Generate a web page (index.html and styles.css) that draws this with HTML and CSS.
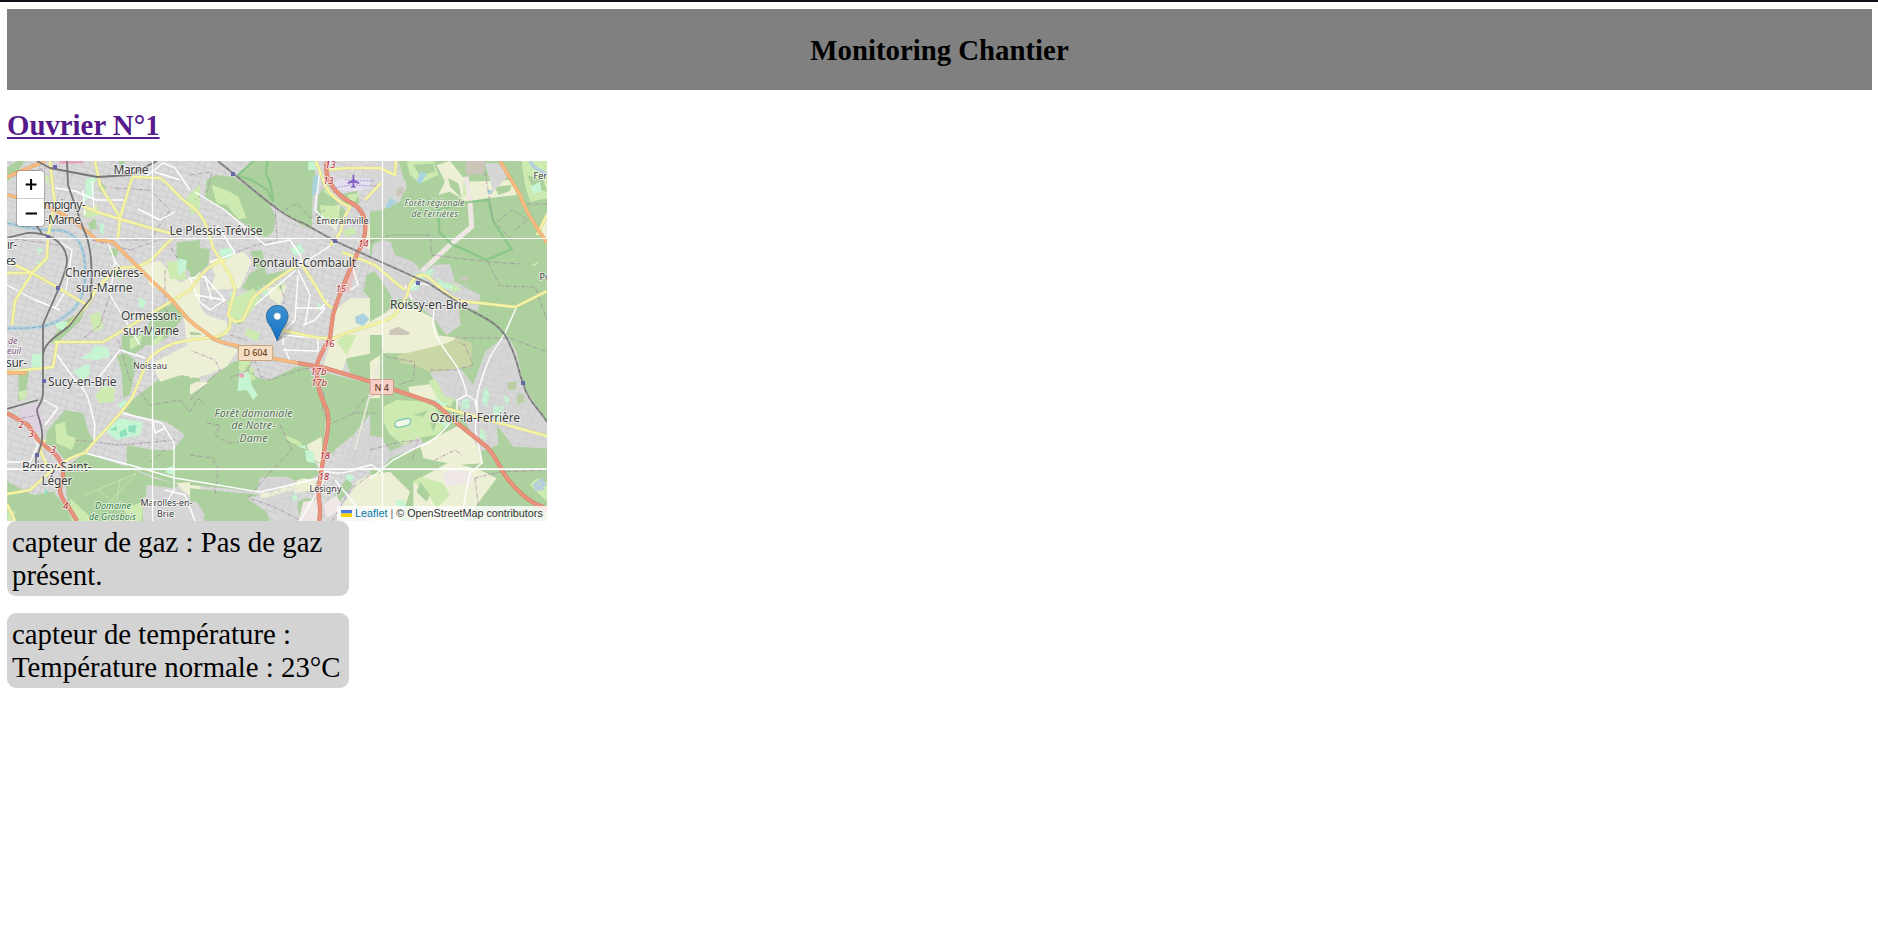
FILE: index.html
```html
<!DOCTYPE html>
<html lang="fr">
<head>
<meta charset="utf-8">
<title>Monitoring Chantier</title>
<link rel="stylesheet" href="styles.css">
</head>
<body>
<header class="banner"><h1 class="banner-title">Monitoring Chantier</h1></header>
<main class="worker">
<h1 class="worker-title"><a class="worker-link" href="#">Ouvrier N°1</a></h1>
<div class="map">
<svg class="map-canvas" viewBox="7 161 540 360" preserveAspectRatio="none">
<defs>
<pattern id="streets" width="61" height="53" patternUnits="userSpaceOnUse" patternTransform="rotate(17) scale(.34)">
<path d="M0 8H61M0 26H38M22 40H61M10 0V26M28 8V53M47 0V40M38 26L61 32M0 46L28 40" fill="none" stroke="#c6c6c6" stroke-width="2"/>
</pattern>
</defs>
<rect x="7" y="161" width="540" height="360" fill="#dadada"/>
<rect x="7" y="161" width="540" height="360" fill="url(#streets)"/>

<!-- land cover, one group per map sector -->
<g transform="translate(0 155) scale(.33333)">
<path class="wood" d="M530 262L600 255V350L580 360L530 318ZM265 205L285 190L292 220L270 226ZM330 278L355 282L350 306L330 300ZM22 38L50 18H75L50 55L22 80ZM455 475L530 440L555 480L500 550L455 570H400L440 530ZM150 560L190 500L245 470L262 450L240 500L190 545L170 570ZM355 18H375L365 45ZM290 65L320 100L300 112Z"/>
<path class="farm" d="M415 330L480 318L540 385L600 350V570H560L550 470L500 420L450 390ZM580 290H600V350Z"/>
<path class="grass" d="M500 320L550 318L560 375L510 372ZM245 170L290 150L300 180L260 190ZM130 55L150 70L145 100ZM270 480L300 470L310 520L280 530ZM340 350L365 340L360 380ZM455 540L480 520L490 550L470 570H455ZM560 125L600 90V160L575 180Z"/>
<path class="park" d="M255 75L290 60L275 125L245 145L258 110ZM300 205L312 204L310 240L300 230ZM165 500L205 500L190 525L170 520ZM530 310L560 315L558 345L535 362ZM418 425L440 440L430 460L415 455ZM115 275L130 285L115 300ZM370 385L385 390L375 420ZM110 320L128 325L118 338Z"/>
<path class="water-line" d="M22 205C80 215 130 230 170 225C230 230 252 270 255 330C260 400 245 450 200 480C150 520 100 520 22 520"/>
<path class="water-edge" d="M22 205C80 215 130 230 170 225C230 230 252 270 255 330C260 400 245 450 200 480C150 520 100 520 22 520"/>
<path fill="#e8a2b8" d="M178 18H248L250 25L180 26Z"/>
</g>
<g transform="translate(190 155) scale(.33333)">
<path class="wood" d="M50 75L75 60L130 65L235 140L257 185L250 230L228 246L190 232L165 208L110 170L45 130ZM140 60L190 18H372L376 60L385 90L368 130L365 222L330 208L240 140ZM385 120L400 100L450 150L465 165L460 205L380 185ZM180 355L225 330L230 370L215 400L190 412L155 400ZM225 360L290 345L240 390L222 390ZM0 275L60 282L55 330L0 375ZM530 360L570 340V420L540 430L520 410ZM480 460L550 450L540 500L480 540L430 545L440 500ZM115 460L150 450L180 470L150 510L115 500ZM545 18H570V35L540 28ZM440 120L500 108L510 145L470 150ZM0 530L35 535L100 545L60 570H0ZM180 290L215 285L225 325L200 340Z"/>
<path class="farm" d="M60 322L160 290L185 320L150 400L60 405L75 360ZM0 415L50 480L110 500L115 540L40 545L0 500ZM430 470L480 430H570V570H450L425 540ZM230 400L290 390L270 450L240 430ZM395 160L450 150L440 230L400 190ZM520 210H570V300L530 280Z"/>
<path class="grass" d="M65 90L110 105L145 125L170 190L145 193L110 150L80 145ZM390 150L445 155L450 200L395 190ZM455 230L490 215L500 235L470 245ZM110 440L190 400L215 430L160 500L120 495ZM170 520L210 535L200 560L165 540ZM470 120L510 115L490 145ZM250 390L285 385L275 410ZM415 90L430 130L400 110Z"/>
<path class="park" d="M355 20H378V45H355ZM85 285L125 275L130 305L100 315ZM300 282L330 265L345 290L315 302ZM120 410L135 405V430L122 428ZM205 395L235 410L225 425ZM380 440L400 455L385 465Z"/>
<path class="water" d="M370 65L390 60L385 105L365 125ZM495 485L520 475L538 492L520 512L498 505Z"/>
<path fill="none" stroke="#7fc182" stroke-width="6" opacity=".8" d="M190 18L142 62L185 75L232 105L250 140L243 90L228 55L232 18"/>
<path fill="#e6c4c2" d="M470 350L500 340L480 410L460 415Z"/>
<path fill="#e5e0ef" d="M430 105L440 75L500 70H560L550 98L500 108Z"/>
</g>
<g transform="translate(370 155) scale(.33333)">
<path class="wood" d="M85 18H531V570H200L190 500L130 460H60L0 510V420L35 360L0 310V170L38 165L80 140L110 100Z"/>
<path class="farm" d="M200 30L240 18L290 80L430 75L440 120L350 130L290 140L240 110L205 120L225 80ZM0 500L80 455L135 460L190 490L215 570H0ZM510 230L531 170V270Z"/>
<path class="wood" d="M235 70L265 85L275 130L240 95ZM375 95L425 90L420 108L385 120Z"/>
<path class="town" d="M0 18H80L70 60L110 80L90 140L30 165H0ZM10 268L40 255L62 260L75 300L130 320L165 360L190 330L240 328L255 380L330 420L325 468L265 450L272 510L230 540L190 490L120 430L70 435L50 400L0 330ZM345 25H385L415 62L370 110Z"/>
<path class="grass" d="M110 18H190L205 60L150 85L120 60ZM455 18H531V130L480 140L465 90ZM280 78H295L300 120L280 125ZM485 330L510 318L495 334ZM235 380L275 400L250 415Z"/>
<path class="wood" d="M130 30L190 25L195 50L150 62ZM470 60L520 75L531 110L490 100Z"/>
<path class="park" d="M130 360L190 340V362L150 375ZM200 370L250 390L245 405L210 398ZM480 95L510 80L515 110L490 118ZM130 375L150 400L120 410Z"/>
<path class="water" d="M140 80L150 50L170 55L155 85ZM45 155L60 130L80 138L60 160ZM354 105L370 106L365 118L352 115Z"/>
<path fill="#ccc5ba" d="M285 18H345L340 58L290 60ZM60 525L85 515L122 535L90 555L52 560ZM80 100L100 95V115L80 125ZM270 368L300 365L295 375L275 374Z"/>
<path fill="none" stroke="#efe7e4" stroke-width="15" d="M288 65L300 140L305 215L240 270L155 350"/>
<path fill="none" stroke="#7fc182" stroke-width="7" opacity=".75" d="M208 232L206 165L285 142L355 135L370 200L425 283L348 315L290 287L245 268Z"/>
<path class="water-line" d="M480 18C490 45 515 45 531 60"/>
</g>
<g transform="translate(0 335) scale(.33333)">
<path class="wood" d="M140 290L195 225L250 235L265 290L285 320L240 355L200 380L165 340L138 325ZM390 200L480 130L545 120L600 128V440L520 445L450 420L380 395V330L460 345L520 345L555 300L500 260L400 240L365 225ZM22 440L100 480L160 470L200 520L215 558H22ZM190 400L255 355L380 395L460 430L540 450L500 470L425 490L430 558H215L200 480ZM350 60L380 55L410 80L390 180L370 190L365 110ZM365 0H480L440 30L400 60L365 40ZM55 110L90 95L75 190L55 200ZM580 490L600 500V558H590Z"/>
<path class="farm" d="M455 85L600 12V130L545 120L480 140ZM530 445L600 440V500L560 480Z"/>
<path class="grass" d="M165 270L195 260L200 300L230 310L215 345L170 325ZM285 185L310 150L345 160L340 200L300 205ZM390 10L430 0L415 30L390 45ZM22 520L45 530L40 558H22ZM210 490L265 540L270 558H215ZM55 170L80 165V190L60 195ZM370 520L430 500L425 558H390Z"/>
<path class="park" d="M318 285L360 250L428 262L420 300L350 315L325 295ZM218 108L268 85L270 120L245 135ZM240 68L270 55L285 30L325 38L330 65L290 75L250 72ZM350 210L375 195L390 205L370 225ZM495 400L520 393V420L500 415ZM95 60L125 55L125 100L95 100Z"/>
<path fill="#8fe0bd" d="M330 285L350 272V288ZM358 292L378 280L382 300L362 308ZM385 272L410 270L405 295L385 290ZM135 460L145 470L135 478Z"/>
<path fill="#ded2e0" d="M65 220L115 205L130 260L125 300L90 270L60 250Z"/>
<path class="town" d="M440 450L530 460L585 490V558H430Z"/>
<path fill="none" stroke="#cdebb0" stroke-width="2" d="M255 480L410 415L320 510M290 465L350 505M360 430L350 500"/>
</g>
<g transform="translate(190 335) scale(.33333)">
<path class="wood" d="M0 180L60 130L130 80L175 70L195 125L235 135L320 95L350 90L385 150L410 230L400 330L385 420L340 440L210 430L200 470L0 450ZM390 110L540 145L570 200L490 300L440 340L412 370L415 260L395 170ZM465 65L520 48L570 55V145L480 115ZM0 460L210 480L170 490L230 530L240 558H45L0 500ZM320 500L350 490L385 500V558H330ZM430 485L470 430L490 450L440 510Z"/>
<path class="farm" d="M0 0H35L90 28L145 45L110 95L50 120L0 130ZM350 330L395 305L400 390L365 370ZM430 0H570V50L470 70L455 110L400 90ZM500 440L570 400V520H450L480 480ZM215 470L340 430L380 435L370 465L280 480L210 490ZM540 260L570 200V310L550 300ZM20 140L60 140L0 180V150Z"/>
<path class="town" d="M505 300L545 270L560 305H570V400L520 390L490 420L430 420L430 390ZM215 425L290 425L320 440L250 470L200 475ZM240 485L310 465L325 500L315 558H270L230 510ZM0 500L20 500L45 540L35 558H0ZM250 10H280L300 60H390L350 95L320 90L250 70Z"/>
<path class="grass" d="M150 65L180 80L165 105L200 130L175 140L145 100ZM285 300L330 320L340 340L290 315ZM550 260L570 250V300H550ZM175 80L195 110L180 115ZM440 20L465 0H500L470 60Z"/>
<path class="park" d="M148 110L178 115L185 150L203 180L190 195L170 165L142 168ZM345 345L370 350L375 385L350 380ZM325 335L345 330L350 343ZM475 415L495 425L480 440L465 430ZM305 480L320 475L325 495L308 500Z"/>
<path fill="#efe8e6" d="M340 500L385 495L390 558H325ZM400 510L440 480L460 520L410 550ZM375 380L400 390L390 405Z"/>
<path fill="#f0a0b8" d="M148 116H162V127H148Z"/>
</g>
<g transform="translate(370 335) scale(.33333)">
<path class="wood" d="M0 0H531V558H0ZZ"/>
<path class="farm" d="M38 0H200L270 10L245 35L200 35L150 55H40ZM115 155L180 148L210 200L170 190L120 180ZM150 330L270 270L315 310L340 385L260 390L160 370ZM0 420L60 410L120 470L90 558H0ZM130 440L240 380L330 405L380 430L320 510L290 558H130ZM0 80L30 60V190H0Z"/>
<path fill="#c9d6a6" d="M80 60L130 50L190 35L230 25L260 10L305 25L305 95L240 105L190 115L130 90L90 85Z"/>
<path class="town" d="M180 115L270 100L310 150L345 50L410 0L440 50L460 150L531 260V340L430 335L380 270L385 330L330 350L310 310L260 200L220 180ZM0 300L45 310L60 350L150 305L162 330L60 370L30 410L0 400Z"/>
<path class="grass" d="M40 215L80 195L180 200L205 230L240 260L200 300L140 310L100 330L60 300L40 260ZM175 140L195 130L225 185L255 190L240 215L205 195ZM150 425L220 445L240 480L200 520L170 470L130 440ZM500 430L531 445V500L480 450Z"/>
<path class="wood" d="M40 285L75 320L60 340L40 320ZM130 240L175 225L160 245ZM150 440L180 480L170 500L140 470ZM180 260L200 265L190 290Z"/>
<path class="park" d="M200 185L222 205L235 200L225 220L195 215ZM345 150L360 180L350 215L335 200ZM370 210L400 215L390 260L370 250ZM330 280L350 295L345 325L330 310ZM200 250L235 265L225 275ZM75 495H105V515H80ZM400 180L420 190L410 215ZM275 195L295 190L300 220L275 225Z"/>
<path fill="#efe8e6" d="M215 420L240 402L300 410L310 440L230 455Z"/>
<path fill="#b8cfa0" d="M412 142L440 140L437 165H415ZM440 180L460 175L465 200L442 208Z"/>
<path fill="#f0f8e8" stroke="#85c7b4" stroke-width="4" d="M75 270Q72 258 90 255L112 250Q126 250 121 263Q118 272 100 274L86 277Q77 278 75 270Z"/>
<path class="water-line" d="M495 450L515 435L522 450L510 455L515 460L500 462Z"/>
</g>
<path fill="url(#streets)" opacity=".7" d="M374 244L392 242L413 262L425 262L450 265L480 295L478 310L460 305L458 325L446 333L430 315L415 300ZM430 373L460 370L475 385L485 352L506 337L518 355L525 390L547 420V448L515 446L497 425L490 450L475 445L455 400ZM357 436L372 425L377 437L388 445L421 438L388 458L370 474L333 475ZM262 477H297L298 503L270 520Z"/>

<!-- boundaries -->
<g class="boundary">
<path d="M115 188L150 190L170 210L150 240H120M92 240L130 250L165 238L180 262M165 270V310L180 320M110 295L100 325L75 345M23 173L45 168M7 238L60 245M190 175L212 172L208 190L195 200M275 205L277 240L256 245L220 258M285 210L297 203L310 218L325 210M280 285L285 300L275 320M258 350L248 370L230 378M370 242L390 235L430 235L432 255L490 262L520 264M488 262L500 286L535 287L547 320M485 172L493 220L512 240M497 222L512 210L528 220L515 230M527 204H547M455 338H510L547 352"/>
<path d="M118 340L130 380L150 405L180 400L190 412L198 398L205 405M75 440L120 445L175 440M250 345L260 376L270 380L300 370L310 368L325 395L322 410L330 424L355 413H375M190 400L205 385L220 370L215 360L190 350M207 423L220 425L215 435L228 443M228 443L240 442M190 455L213 458L218 470L215 495M280 425L292 450L265 478L248 498L270 505L300 520M352 415L365 398L380 393M380 350L387 357L415 362L413 380L398 385M430 370L455 370L473 365L465 345L458 342M370 450L400 442L418 440L412 460M435 460L455 450L462 455M475 478L480 520M475 478L500 472L547 470M230 335L247 340M332 521L350 490L370 475M22 418L38 415M150 462L165 450"/>
</g>

<!-- minor roads -->
<g class="minor">
<path d="M55 188L75 191L96 200H125M92 181L94 210M107 239L115 262L125 272M7 285L35 300L60 310M60 242L72 250L66 290L55 308M115 262L110 295L140 345M138 209L160 220L175 212M147 176L163 163L175 168L190 190M155 172L180 180M83 190L85 215"/>
<path d="M195 192L225 210L265 245L290 240L300 255L302 265M217 225L235 253L210 262M296 270L255 305M298 275L295 320L275 340M298 270L310 295L305 325M300 265L335 243M328 300L320 310M190 278L205 277L225 300L210 310L200 302ZM205 277L212 300M195 295L225 300M295 308L325 308M303 325L315 320L325 308M320 170L315 210L330 225M283 345V335L318 338V351L283 350M285 348L290 362M352 265L358 285L350 290M405 285L412 300M410 288C420 280 435 285 440 292"/>
<path d="M57 355L75 380C82 385 88 395 90 405L95 425L94 440M44 400L58 408L45 425M30 430L38 445L30 462H7M97 380L120 350L145 358M122 413L150 420L162 423L174 443V490L165 505L152 500M85 453L130 465L175 478L260 492L320 478M153 421L155 433L165 428M165 490L185 495L195 521"/>
<path d="M434 308L433 325C435 340 450 355 457 367C461 375 465 385 467 396M517 306L505 333L490 357C485 370 480 380 477 397V417C472 430 480 445 482 463L470 473C467 485 465 500 463 508L460 521M457 410V400L467 395L475 400L477 410M450 423C440 435 430 443 423 445C410 450 400 457 393 460L370 479M317 470L335 473C350 475 360 465 372 465L382 473M335 480L357 507M326 477L300 521"/>
</g>
<path fill="none" stroke="#e7e7dc" stroke-width="1.800" d="M380 362L371 390L355 450"/>

<!-- main roads, casing then fill -->
<g class="casing">
<path id="yellow-a" d="M50 161L53 189L55 202L48 236L47 258L32 273L15 301L12 325M7 261L32 273L57 287L87 305L97 288L117 268L133 267C153 265 160 248 173 238M7 273H32M95 161L100 185C107 198 120 215 120 218L118 238M132 178L120 218M80 205L100 213L120 219L147 227L177 235M132 177L160 178C170 184 180 200 190 205C200 212 205 222 208 230L213 248L230 275L235 290L228 315L235 322L243 320L253 298L275 280L298 265M67 327L87 305M54 342H103L127 328L190 290C198 280 205 265 225 260L215 262M190 340L215 337C225 335 232 330 230 318M190 340L175 343C160 348 152 355 148 360L132 398C120 415 110 425 95 441L85 453C75 455 60 463 50 472L30 490L7 494M7 372L53 367L57 343M45 440L40 450L50 472M7 504L15 521M316 161L325 185C330 195 340 203 350 207L343 220C342 235 335 240 330 245M326 170L347 168L380 168L395 175L396 161M365 200L381 183M302 265L315 285L325 302L332 308M280 330L320 338L335 338C350 330 365 328 380 322C395 320 405 305 410 285C415 275 420 274 427 276L445 292C453 300 460 302 480 303L515 307L547 291M342 252L375 265L390 278L405 290M442 407L477 417L547 436M537 235L547 215"/>
</g>
<use class="yellow" href="#yellow-a"/>
<g class="orange-case"><path id="orange-a" d="M7 177L45 161M7 195L20 198M43 205C67 215 80 225 97 240L113 242L153 282L167 295C180 308 187 322 205 332C215 342 225 343 238 346L270 358L298 363M500 161L520 195C525 210 535 225 547 243M7 373H27"/></g>
<use class="orange" href="#orange-a"/>
<g class="motor-case"><path id="motor-a" d="M327 161C323 180 337 195 350 202C370 212 368 235 358 252C348 274 340 290 333 315L330 338C325 347 318 358 317 365C316 385 320 395 327 410C331 425 325 440 323 460L320 480C315 495 323 505 319 521M298 363L325 368L372 382L395 390C415 397 427 400 437 405L457 423L487 447C495 455 500 468 505 475C515 490 530 503 543 507L547 511M7 413L28 425L38 440L50 450C62 458 65 470 62 482C55 495 67 502 77 521"/></g>
<use class="motor" href="#motor-a"/>

<!-- railways -->
<g class="rail">
<path d="M37 161L50 168L97 177L130 175L157 161M67 161L68 185L83 228C93 248 92 272 91 298L70 325C60 335 45 340 43 355M7 238L27 233C53 232 67 245 67 262C65 280 48 310 43 325V395C40 410 35 405 38 415C43 430 45 440 36 458V470M36 225L43 235M7 409L38 400"/>
<path id="main-line" d="M218 161L235 175C260 195 285 218 303 223L335 241L370 257L428 283L470 310C485 318 503 325 510 345C518 360 519 375 523 383C527 400 540 410 547 422"/>
</g>
<use class="rail-dash" href="#main-line"/>
<g fill="#6668a9"><path d="M53 165h4v4h-4zM231 172h4v4h-4zM46 235h4v4h-4zM56 286h4v4h-4zM333 239h4v4h-4zM416 281h4v4h-4zM521 381h4v4h-4zM42 379h4v4h-4zM35 453h4v4h-4z"/></g>
<path class="runway" d="M335 188L350 185L377 186M345 180L375 181"/>
<path fill="#8461c4" d="M352.500 175q1-1 1.800 0v4.500l5 3v1.600l-5-1.400v3l1.500 1.300v1l-2.400-.6-2.400.6v-1l1.500-1.300v-3l-5 1.400v-1.600l5-3z"/>

<!-- place names -->
<g class="label">
<text x="113.500" y="173.500" textLength="35">Marne</text>
<text x="43.500" y="208.500" textLength="42">mpigny-</text>
<text x="45" y="223.500" textLength="36">-Marne</text>
<text x="7" y="249" textLength="10">ır-</text>
<text x="6" y="265" textLength="10">es</text>
<text x="65" y="276.500" textLength="78">Chennevières-</text>
<text x="76" y="291.500" textLength="56.500">sur-Marne</text>
<text x="121" y="320" textLength="60">Ormesson-</text>
<text x="123" y="335" textLength="56">sur-Marne</text>
<text x="169.500" y="234.500" textLength="93">Le Plessis-Trévise</text>
<text x="252.500" y="266.500" textLength="103.500">Pontault-Combault</text>
<text x="390" y="309" textLength="78">Roissy-en-Brie</text>
<text x="48" y="385.500" textLength="68.500">Sucy-en-Brie</text>
<text x="6" y="367" textLength="21">sur-</text>
<text x="22" y="470.500" textLength="69.500">Boissy-Saint-</text>
<text x="41.500" y="485" textLength="31">Léger</text>
<text x="430" y="421.500" textLength="90">Ozoir-la-Ferrière</text>
</g>
<g class="label label-small">
<text x="316.500" y="224" textLength="52">Émerainville</text>
<text x="133" y="368.500" textLength="34">Noiseau</text>
<text x="309.500" y="491.500" textLength="32">Lésigny</text>
<text x="140.500" y="505.500" textLength="52">Marolles-en-</text>
<text x="157" y="517" textLength="17">Brie</text>
<text x="533.500" y="178.500">Fer</text>
<text x="539.500" y="280">Po</text>
</g>
<g class="label label-nature">
<text x="404.500" y="205.500" textLength="60">Forêt régionale</text>
<text x="411.500" y="216.500" textLength="46.500">de Ferrières</text>
</g>
<g class="label label-nature label-wood">
<text x="214.500" y="416.500" textLength="78">Forêt domaniale</text>
<text x="231.500" y="429" textLength="44">de Notre-</text>
<text x="239.500" y="442" textLength="28">Dame</text>
</g>
<g class="label label-nature label-reserve">
<text x="95" y="509" textLength="36">Domaine</text>
<text x="89" y="520" textLength="47">de Grosbois</text>
</g>
<g class="label label-nature label-river"><text x="8" y="344">de</text><text x="7" y="354">euil</text></g>
<g class="label label-exit">
<text x="325" y="168">13</text><text x="323" y="184">13</text><text x="358" y="247">14</text><text x="335.500" y="292">15</text><text x="324" y="346.500">16</text>
<text x="310.500" y="374.500">17b</text><text x="311" y="385.500">17b</text><text x="319.500" y="459">18</text><text x="318.500" y="479.500">18</text>
<text x="18.500" y="428">2</text><text x="28.500" y="436.500">3</text><text x="50.500" y="453">3</text><text x="63" y="508.500">4</text>
</g>
<g class="shield">
<rect x="238.300" y="345.500" width="34.500" height="15" rx="1.500" fill="#f7dfc5" stroke="#c9a37c"/>
<text x="243.500" y="356" textLength="24" fill="#6b4521">D 604</text>
<rect x="370" y="379.500" width="23.500" height="15" rx="1.500" fill="#f4cfc6" stroke="#d39a8f"/>
<text x="374.500" y="390.500" textLength="14.500" fill="#744029">N 4</text>
</g>

<!-- tile seams -->
<path fill="none" stroke="#fff" stroke-width="1.200" d="M152.500 161V521M382.500 161V521M7 238.500H547"/>
<path fill="none" stroke="#fff" stroke-width="1.700" d="M7 469.200H547"/>
</svg>
<svg class="marker" viewBox="0 0 37 37">
<defs><linearGradient id="pin" x2="0" y2="1"><stop stop-color="#3f93cf"/><stop offset="1" stop-color="#126fc6"/></linearGradient>
<linearGradient id="shade"><stop stop-color="#333" stop-opacity=".45"/><stop offset="1" stop-color="#555" stop-opacity=".02"/></linearGradient></defs>
<path d="M11.500 36L19 20Q24 14 28 19Q30 25 21 31Z" fill="url(#shade)"/>
<path d="M11.200 .5C5.200 .5 .5 5.200 .5 11.200C.5 16 3.100 19 5.100 22.400C7.300 26.200 9 30.500 11.200 36C13.500 30.500 15.200 26.200 17.400 22.400C19.400 19 22 16 22 11.200C22 5.200 17.300 .5 11.200 .5Z" fill="url(#pin)" stroke="#2e6c97"/>
<circle cx="11.300" cy="11.300" r="3.700" fill="#fff" stroke="#2e6c97" stroke-width=".5"/>
</svg>
<div class="zoom-control"><span class="zoom-button"><svg viewBox="0 0 27 27"><path d="M8.700 13.500H19.500M14.100 8V19" stroke="#000" stroke-width="2" fill="none"/></svg></span><span class="zoom-button"><svg viewBox="0 0 27 27"><path d="M8.700 14.500H20" stroke="#000" stroke-width="2" fill="none"/></svg></span></div>
<div class="attribution"><svg class="flag" viewBox="0 0 11 7"><path fill="#4c7be1" d="M0 0h11v3.500H0z"/><path fill="#ffd500" d="M0 3.500h11V7H0z"/></svg><a class="attribution-link" href="#">Leaflet</a><span class="separator">|</span><span>© OpenStreetMap contributors</span></div>
</div>
<p class="sensor">capteur de gaz : Pas de gaz présent.</p>
<p class="sensor">capteur de température : Température normale : 23°C</p>
</main>
</body>
</html>
```

FILE: styles.css
```css
* { box-sizing: border-box; }
body {
  margin: 0;
  min-height: 931px;
  padding: 7px 6px 0 7px;
  border-top: 2px solid #110d16;
  background: #fff;
  color: #000;
  font-family: "Liberation Serif", "Times New Roman", serif;
  overflow: hidden;
}
.banner {
  height: 81px;
  display: flex;
  align-items: center;
  justify-content: center;
  padding-top: 1px;
  background: #808080;
}
.banner-title, .worker-title {
  margin: 0;
  font-size: 28.8px;
  line-height: 33px;
  font-weight: bold;
}
.worker-title { margin: 19px 0; }
.worker-link { color: #551a8b; text-decoration: underline; }
.map { position: relative; width: 540px; height: 360px; overflow: hidden; }
.map-canvas { display: block; width: 540px; height: 360px; }
.wood { fill: #add19e; }
.farm { fill: #eef0d5; }
.grass { fill: #cdebb0; }
.park { fill: #c5f5d3; }
.water { fill: #aad3df; }
.town { fill: #d6d6d6; }
.water-line { fill: none; stroke: #b5d0da; stroke-width: 11; }
.water-edge { fill: none; stroke: #7fb1cc; stroke-width: 3; stroke-dasharray: 12 7; }
.boundary { fill: none; stroke: #a283a4; stroke-width: .9; stroke-dasharray: 4 1.5 1 1.5; opacity: .8; }
.minor { fill: none; stroke: #fff; stroke-width: 1.4; stroke-linejoin: round; }
/* Each road path is drawn twice: the group gives the casing, the reuse gives the fill. */
.casing { fill: none; stroke: #d0d096; stroke-width: 3.2; stroke-linejoin: round; }
.yellow { fill: none; stroke: #f5f3a4; stroke-width: 2.5; stroke-linejoin: round; }
.orange-case { fill: none; stroke: #dda267; stroke-width: 3.6; stroke-linejoin: round; }
.orange { fill: none; stroke: #f8bc82; stroke-width: 2.7; stroke-linejoin: round; }
.motor-case { fill: none; stroke: #d67c67; stroke-width: 4.2; stroke-linejoin: round; }
.motor { fill: none; stroke: #e9937d; stroke-width: 3.2; stroke-linejoin: round; }
.rail { fill: none; stroke: #777; stroke-width: 1.8; stroke-linejoin: round; }
.rail-dash { fill: none; stroke: #bbb; stroke-width: .6; stroke-dasharray: 4 3; }
.runway { fill: none; stroke: #a08fc9; stroke-width: 1.2; stroke-dasharray: 2 1; opacity: .7; }
.label {
  font-family: "Noto Sans", sans-serif;
  font-size: 12px;
  fill: #3c3c3c;
  stroke: rgba(255, 255, 255, .6);
  stroke-width: 2px;
  stroke-linejoin: round;
  paint-order: stroke;
}
.label-small { font-size: 9px; }
.label-nature { font-size: 8.8px; font-style: italic; fill: #5b7057; }
.label-wood { font-size: 10.6px; }
.label-reserve { font-size: 9px; fill: #2d7d3b; }
.label-river { fill: #81577f; }
.label-exit { font-size: 9.6px; font-style: italic; fill: #b62a39; }
.shield { font-family: "Noto Sans", sans-serif; font-size: 9px; font-weight: 500; }
.marker { position: absolute; left: 259px; top: 144px; width: 37px; height: 37px; }
.zoom-control {
  position: absolute;
  left: 10px;
  top: 10px;
  width: 27px;
  height: 55px;
  background: #fff;
  border-radius: 3px;
  box-shadow: 0 0 0 1px rgba(0, 0, 0, .2);
}
.zoom-button { display: block; width: 27px; height: 27px; }
.zoom-button svg { display: block; width: 27px; height: 27px; }
.zoom-button + .zoom-button { height: 28px; border-top: 1px solid #ccc; }
.attribution {
  position: absolute;
  right: 0;
  bottom: 0;
  display: flex;
  align-items: center;
  width: 210px;
  height: 15px;
  padding: 0 4px;
  background: rgba(255, 255, 255, .8);
  color: #333;
  font-family: "Liberation Sans", Arial, sans-serif;
  font-size: 10.8px;
  line-height: 15px;
  white-space: nowrap;
}
.flag { width: 11px; height: 7px; margin-right: 3px; }
.attribution-link { color: #0078a8; text-decoration: none; }
.separator { margin: 0 3px; color: #666; }
.sensor {
  width: 342px;
  height: 75px;
  margin: 0 0 17px;
  padding: 5px 4px 4px 5px;
  border-radius: 9px;
  background: #d3d3d3;
  font-size: 28.8px;
  line-height: 33px;
}
```
